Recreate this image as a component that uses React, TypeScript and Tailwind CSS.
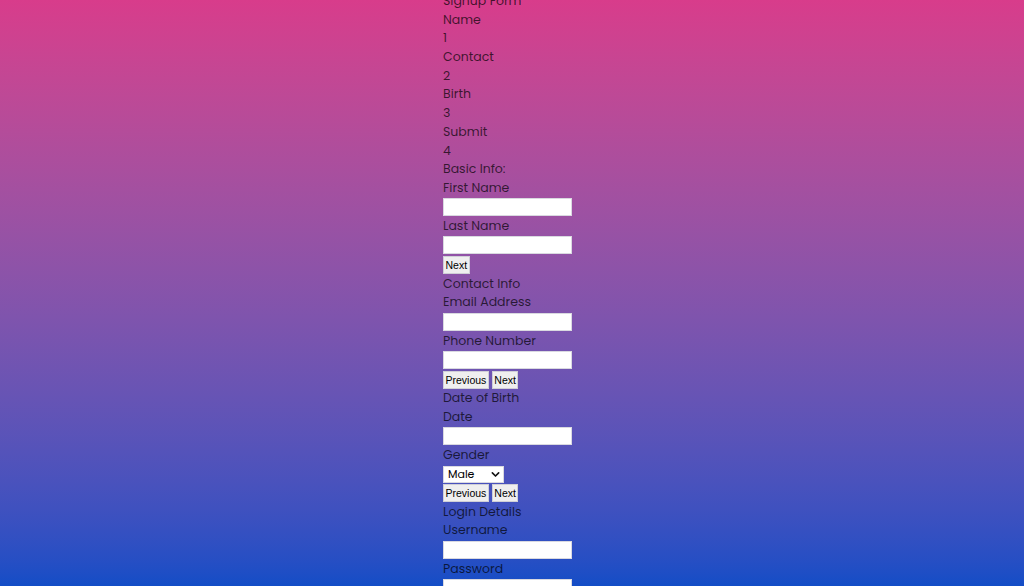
import React from "react";

const Line = ({ children }: { children: React.ReactNode }) => (
  <div className="h-[18.7px] leading-[18.7px] whitespace-nowrap">{children}</div>
);

const Field = () => (
  <div className="h-[19.5px] pt-[0.6px]">
    <input
      type="text"
      className="block h-[18px] w-[129px] bg-white border border-[#d9d9e0] outline-none"
    />
  </div>
);

const Btn = ({ children }: { children: React.ReactNode }) => (
  <button
    type="button"
    className="h-[18px] px-[1.5px] bg-[#efefef] border border-[#cfcfd6] text-[10.5px] leading-[16px] text-black font-['Liberation_Sans',Arial,sans-serif]"
  >
    {children}
  </button>
);

const Buttons = ({ prev }: { prev?: boolean }) => (
  <div className="h-[19.5px] pt-[1px] flex gap-[3px]">
    {prev && <Btn>Previous</Btn>}
    <Btn>Next</Btn>
  </div>
);

export default function App() {
  return (
    <div className="h-[586px] w-[1024px] overflow-hidden bg-gradient-to-b from-[#d83c8b] to-[#134dc6] font-['Poppins','Inter',sans-serif] text-[12.5px] text-black/70">
      <div className="mx-auto w-[138px] mt-[-8px]">
        <Line>Signup Form</Line>
        <Line>Name</Line>
        <Line>1</Line>
        <Line>Contact</Line>
        <Line>2</Line>
        <Line>Birth</Line>
        <Line>3</Line>
        <Line>Submit</Line>
        <Line>4</Line>
        <Line>Basic Info:</Line>
        <Line>First Name</Line>
        <Field />
        <Line>Last Name</Line>
        <Field />
        <Buttons />
        <Line>Contact Info</Line>
        <Line>Email Address</Line>
        <Field />
        <Line>Phone Number</Line>
        <Field />
        <Buttons prev />
        <Line>Date of Birth</Line>
        <Line>Date</Line>
        <Field />
        <Line>Gender</Line>
        <div className="h-[18.4px] pt-[1.4px]">
          <div className="relative w-[61px] h-[17px]">
            <select className="appearance-none block w-[61px] h-[17px] bg-white border border-[#d9d9e0] pl-[4px] text-[11px] leading-[15px] text-black outline-none">
              <option>Male</option>
            </select>
            <svg
              className="absolute right-[4px] top-[4px] pointer-events-none"
              width="9"
              height="9"
              viewBox="0 0 10 10"
            >
              <path d="M1.5 3.2 L5 6.7 L8.5 3.2" fill="none" stroke="#111" strokeWidth="1.8" strokeLinecap="round" strokeLinejoin="round" />
            </svg>
          </div>
        </div>
        <Buttons prev />
        <Line>Login Details</Line>
        <Line>Username</Line>
        <Field />
        <Line>Password</Line>
        <Field />
      </div>
    </div>
  );
}
